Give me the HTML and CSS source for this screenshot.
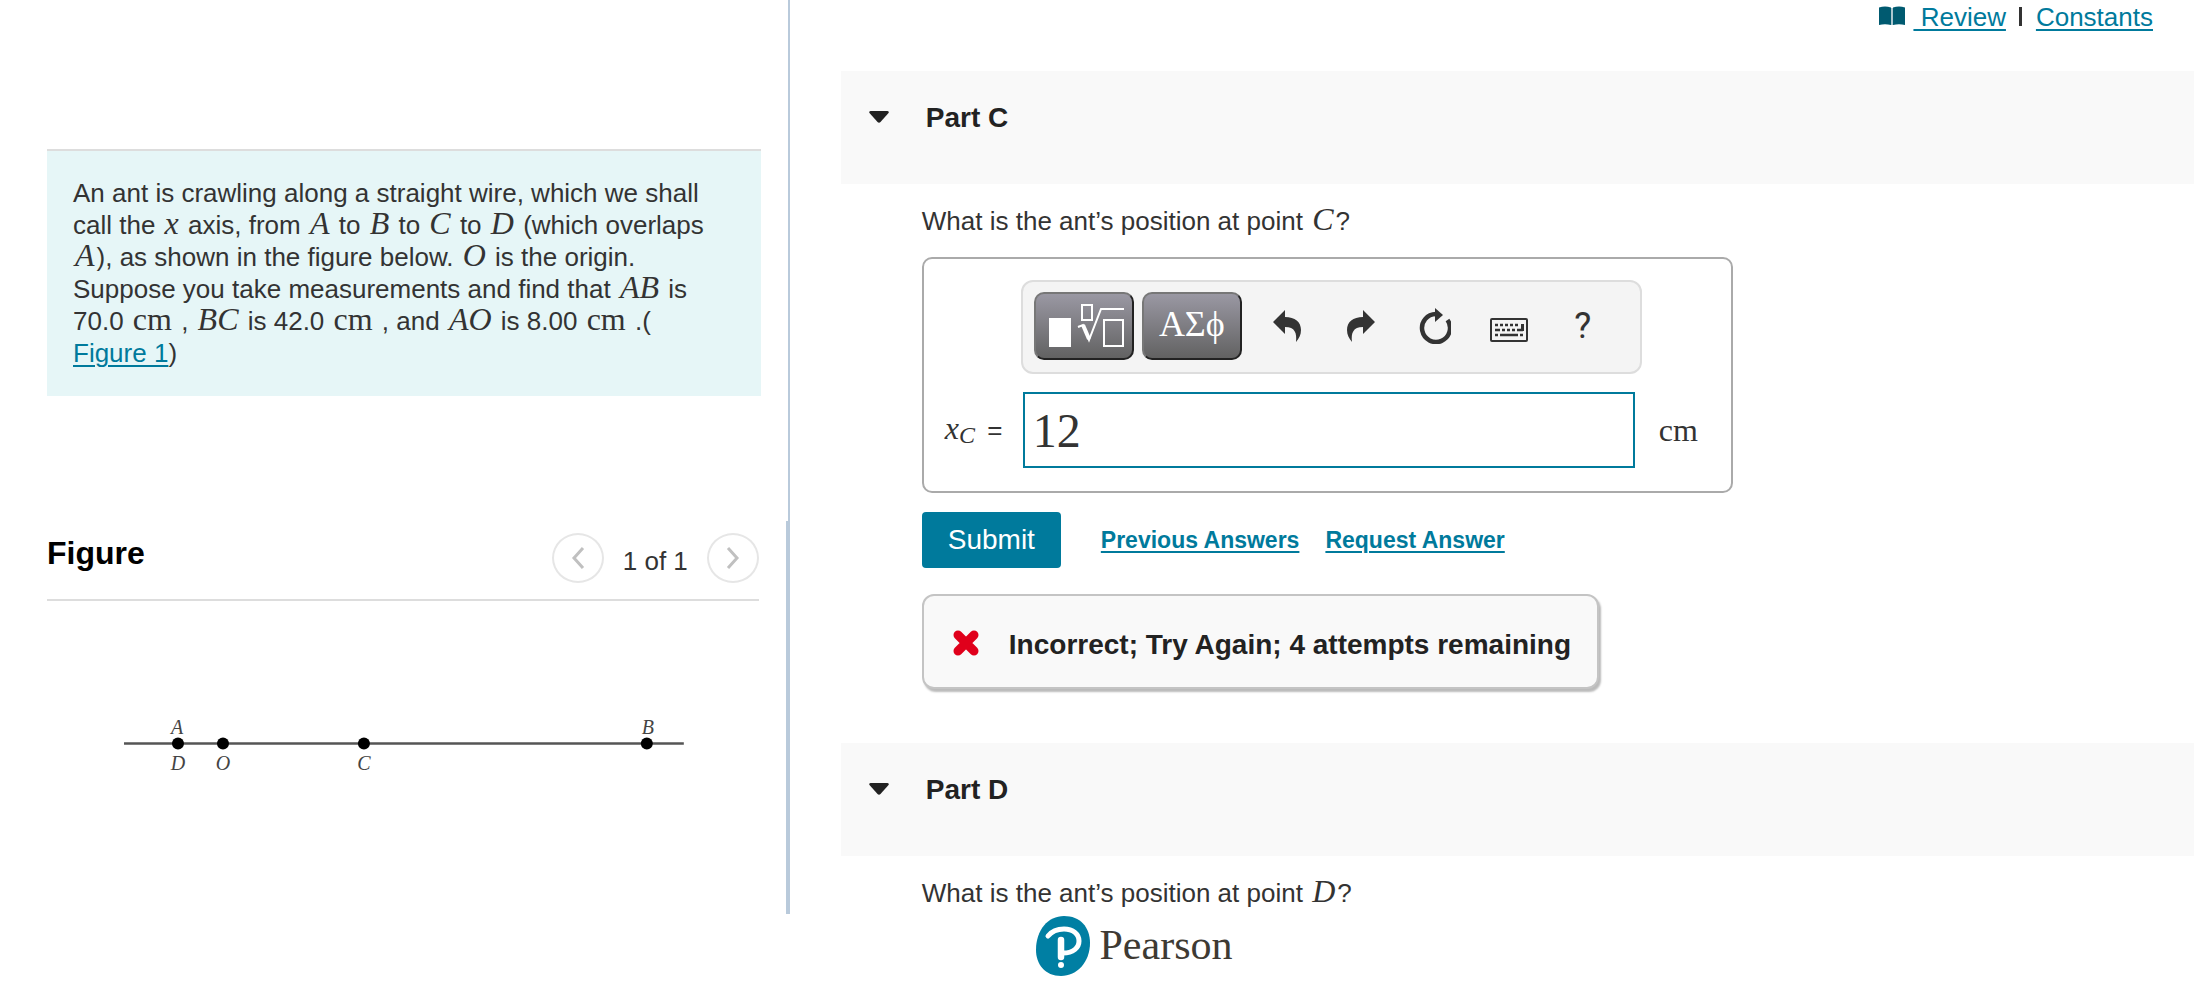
FILE: index.html
```html
<!DOCTYPE html>
<html lang="en">
<head>
    <meta charset="UTF-8">
    <meta name="viewport" content="width=device-width, initial-scale=1.0">
    <title>Mastering Physics</title>
    <link rel="stylesheet" href="styles.css">
</head>

<body>
    <main class="page">
        <aside class="left">
            <section class="intro">
                <div class="problem">
                    An ant is crawling along a straight wire, which we shall call the <i class="math">x</i> axis, from <i class="math">A</i> to <i class="math">B</i> to <i class="math">C</i> to <i class="math">D</i> (which overlaps <i class="math">A</i>), as shown in the figure below. <i class="math">O</i> is the origin. Suppose you take measurements and find that <i class="math">AB</i> is 70.0 <span class="unit">cm</span> , <i class="math">BC</i> is 42.0 <span class="unit">cm</span> , and <i class="math">AO</i> is 8.00 <span class="unit">cm</span> .(<br>
                    <a href="#figure">Figure 1</a>)
                </div>
            </section>
            <section class="figure" id="figure">
                <div class="figure-head">
                    <h2>Figure</h2>
                    <div class="pager">
                        <button class="round" aria-label="Previous figure">
                            <svg width="14" height="22" viewBox="0 0 14 22"><path d="M12 1 3 11l9 10"/></svg>
                        </button>
                        <span>1 of 1</span>
                        <button class="round" aria-label="Next figure">
                            <svg width="14" height="22" viewBox="0 0 14 22"><path d="M2 1l9 10-9 10"/></svg>
                        </button>
                    </div>
                </div>
                <svg class="wire" viewBox="0 0 712 90">
                    <path d="M77 43.5H637" stroke="#555" stroke-width="2.5"/>
                    <circle cx="131" cy="43.5" r="6"/>
                    <circle cx="176" cy="43.5" r="6"/>
                    <circle cx="317" cy="43.5" r="6"/>
                    <circle cx="600" cy="43.5" r="6"/>
                    <text x="130" y="34">A</text>
                    <text x="601" y="34">B</text>
                    <text x="131" y="70">D</text>
                    <text x="176" y="70">O</text>
                    <text x="317" y="70">C</text>
                </svg>
            </section>
        </aside>

        <div class="right">
            <nav class="links">
                <svg width="26" height="20" viewBox="0 0 26 20"><path d="M0 1.500Q6-.5 12 1.500V19Q6 17.500 0 19ZM14 1.500Q20-.5 26 1.500V19Q20 17.500 14 19Z" fill="#005a70"/><path d="M13 2v17" stroke="#8fb4bf" stroke-width="1.500"/></svg>
                <a class="review" href="#review">&nbsp;Review</a>
                <span class="sep"></span>
                <a href="#constants">Constants</a>
            </nav>

            <section>
                <h3 class="part-head">
                    <svg width="20" height="12" viewBox="0 0 20 12"><path d="M1.500 0h17q2 .5 1 2l-8 9q-1.500 1.500-3 0l-8-9q-1-1.500 1-2z"/></svg>
                    Part C
                </h3>
                <div class="part-body">
                    <p class="question">What is the ant’s position at point <i class="math">C</i>?</p>
                    <div class="answer">
                        <div class="toolbar">
                            <button class="dark" aria-label="Templates">
                                <svg width="96" height="64" viewBox="0 0 96 64" fill="none" stroke="#fff" stroke-width="2">
                                    <path d="M14 25h20v27H14z" fill="#fff"/>
                                    <path d="M46 11h10v15H46zM68 26h19v26H68z"/>
                                    <path d="M42 33l5-2 6 15 12-31h23"/>
                                    <path d="M47 31l6 14" stroke-width="4"/>
                                </svg>
                            </button>
                            <button class="dark greek">ΑΣϕ</button>
                            <div class="tools">
                                <button aria-label="Undo">
                                    <svg width="28" height="32" viewBox="0 0 28 32"><path d="M0 12 12 0v7c10 0 16 5 16 13 0 5-2 8-5 12 1-9-1-15-11-15v7z"/></svg>
                                </button>
                                <button aria-label="Redo">
                                    <svg width="28" height="32" viewBox="0 0 28 32"><path d="M28 12 16 0v7C6 7 0 12 0 20c0 5 2 8 5 12-1-9 1-15 11-15v7z"/></svg>
                                </button>
                                <button aria-label="Reset">
                                    <svg width="32" height="36" viewBox="0 0 32 36"><path d="M17 6A14 14 0 1 0 28.500 12" fill="none" stroke="#333" stroke-width="4.500"/><path d="M16 0l8 7-8 7z"/></svg>
                                </button>
                                <button class="keyboard" aria-label="Keyboard shortcuts">
                                    <svg width="38" height="24" viewBox="0 0 38 24"><rect x="1" y="1" width="36" height="22" rx="1" fill="none" stroke="#333" stroke-width="2"/><path d="M5 7h3M10 7h3M15 7h3M20 7h3M25 7h3M5 12h5M12 12h3M17 12h3M22 12h3M27 12h6M5 17h3M10 17h18M30 17h3" stroke="#333" stroke-width="2.500"/><path d="M31 6h3v7h-3z"/></svg>
                                </button>
                                <button class="help">?</button>
                            </div>
                        </div>
                        <label for="xc"><i class="math">x<sub>C</sub></i> =</label>
                        <input id="xc" type="text" value="12">
                        <span class="unit answer-unit">cm</span>
                    </div>
                    <div class="actions">
                        <button class="submit">Submit</button>
                        <a href="#previous">Previous Answers</a>
                        <a href="#request">Request Answer</a>
                    </div>
                    <div class="feedback">
                        <svg width="28" height="28" viewBox="0 0 28 28"><path d="M6 6l16 16M22 6L6 22" stroke="#e0001b" stroke-width="9" stroke-linecap="round"/></svg>
                        Incorrect; Try Again; 4 attempts remaining
                    </div>
                </div>
            </section>

            <section>
                <h3 class="part-head">
                    <svg width="20" height="12" viewBox="0 0 20 12"><path d="M1.500 0h17q2 .5 1 2l-8 9q-1.500 1.500-3 0l-8-9q-1-1.500 1-2z"/></svg>
                    Part D
                </h3>
                <div class="part-body">
                    <p class="question">What is the ant’s position at point <i class="math">D</i>?</p>
                </div>
            </section>
        </div>
    </main>

    <footer class="footer">
        <svg width="54" height="60" viewBox="0 0 54 60">
            <path d="M28 0C44 0 54 11 54 27 54 46 41 60 25 60 9 60 0 48 0 34 0 14 12 0 28 0z" fill="#007fa3"/>
            <path d="M12 20C16 15 22 13 28 13c9 0 15 5 15 12 0 7-6 12-16 12" fill="none" stroke="#fff" stroke-width="5" stroke-linecap="round"/>
            <path d="M25 24v17" stroke="#fff" stroke-width="6.500" stroke-linecap="round"/>
            <circle cx="25" cy="49" r="3" fill="#fff"/>
        </svg>
        <span>Pearson</span>
    </footer>
</body>
</html>
```
FILE: styles.css
```css
* {
    box-sizing: border-box;
}
body {
    margin: 0;
    font-family: "Liberation Sans", Arial, sans-serif;
    font-size: 26px;
    line-height: 32px;
    color: #333;
    background-color: #fff;
}
h2, h3, p {
    margin: 0;
}
a {
    color: #007a9c;
    text-underline-offset: 3px;
    text-decoration-thickness: 2px;
}
button {
    font-family: inherit;
    padding: 0;
    cursor: pointer;
}
.page {
    display: flex;
}
.math, .unit {
    padding: 0 2px;
    font-family: "Liberation Serif", "Times New Roman", serif;
    font-size: 32px;
    line-height: 0;
}

/* left column */
.left {
    flex: 0 0 36%;
    display: flex;
    flex-direction: column;
}
.intro {
    height: 521px;
    padding: 149px 27px 0 47px;
    border-right: 2px solid #b9cadb;
}
.problem {
    padding: 26px 20px 27px 26px;
    background-color: #e6f6f7;
    border-top: 2px solid #ddd;
}
.figure {
    flex: 1;
    padding: 0 27px 0 47px;
    border-right: 4px solid #b9cadb;
}
.figure-head {
    display: flex;
    justify-content: space-between;
    padding: 12px 0 16px;
    border-bottom: 2px solid #ddd;
}
.figure-head h2 {
    font-size: 32px;
    line-height: 40px;
    color: #000;
}
.pager {
    display: flex;
    gap: 19px;
}
.pager span {
    padding-top: 12px;
}
.round {
    width: 52px;
    height: 50px;
    display: flex;
    justify-content: center;
    align-items: center;
    background-color: #fff;
    border: 2px solid #e6e6e6;
    border-radius: 50%;
}
.round path {
    fill: none;
    stroke: #c0c0c0;
    stroke-width: 3;
}
.wire {
    display: block;
    width: 100%;
    margin-top: 99px;
}
.wire text {
    font-family: "Liberation Serif", "Times New Roman", serif;
    font-size: 20px;
    font-style: italic;
    text-anchor: middle;
    fill: #444;
}

/* right column */
.right {
    flex: 1;
    padding: 0 0 5px 51px;
}
.links {
    display: flex;
    justify-content: flex-end;
    height: 71px;
    padding: 1px 41px 0 0;
}
.links svg {
    margin: 5px 8px 0 0;
}
.sep {
    width: 3px;
    height: 19px;
    margin: 6px 14px 0 13px;
    background-color: #333;
}
.part-head {
    display: flex;
    gap: 37px;
    height: 113px;
    padding: 31px 28px 0;
    font-size: 28px;
    color: #222;
    background-color: #f9f9f9;
}
.part-head svg {
    margin-top: 9px;
    fill: #222;
}
.part-body {
    padding: 21px 0 0 81px;
}
.question {
    height: 32px;
}
.answer {
    display: grid;
    grid-template-columns: 97px 1fr 89px;
    row-gap: 18px;
    align-items: center;
    max-width: 811px;
    margin-top: 20px;
    padding: 21px 0 23px;
    border: 2px solid #aaa;
    border-radius: 10px;
}
.toolbar {
    grid-column: 2;
    display: flex;
    gap: 8px;
    height: 94px;
    padding: 10px 11px;
    background-color: #f4f4f4;
    border: 2px solid #ddd;
    border-radius: 12px;
}
.dark {
    width: 100px;
    height: 68px;
    color: #fff;
    background-image: linear-gradient(#9a98a3, #626262);
    border: 2px solid;
    border-color: #777 #222 #222 #777;
    border-radius: 10px;
}
.dark svg {
    display: block;
}
.greek {
    padding-bottom: 4px;
    font-family: "Liberation Serif", "Times New Roman", serif;
    font-size: 36px;
}
.tools {
    display: flex;
    height: 68px;
}
.tools button {
    width: 74px;
    display: flex;
    justify-content: center;
    align-items: center;
    background: none;
    border: none;
    color: #333;
}
.tools path {
    fill: #333;
}
.tools path[fill="none"] {
    fill: none;
}
.tools .keyboard {
    padding-top: 8px;
}
.tools .help {
    font-family: Roboto, "Liberation Sans", sans-serif;
    font-size: 36px;
}
.answer label {
    grid-column: 1;
    padding-left: 19px;
}
.answer sub {
    padding-right: 3px;
    font-size: 24px;
    vertical-align: -4px;
}
.answer input {
    min-width: 0;
    height: 76px;
    margin: 0 7px 0 2px;
    padding: 0 8px;
    font-family: "Liberation Serif", "Times New Roman", serif;
    font-size: 48px;
    color: #333;
    border: 2px solid #007a9c;
    outline: none;
}
.answer-unit {
    padding-left: 17px;
}
.actions {
    display: flex;
    align-items: center;
    gap: 26px;
    height: 56px;
    margin-top: 19px;
}
.actions a {
    font-size: 23px;
    font-weight: bold;
}
.submit {
    width: 139px;
    height: 56px;
    margin-right: 14px;
    font-size: 28px;
    color: #fff;
    background-color: #007a9c;
    border: none;
    border-radius: 4px;
}
.feedback {
    display: flex;
    align-items: center;
    gap: 29px;
    width: fit-content;
    height: 95px;
    margin: 26px 0 54px;
    padding: 6px 26px 0 28px;
    font-size: 28px;
    font-weight: bold;
    color: #222;
    background-color: #f9f9f9;
    border: 2px solid #c4c4c4;
    border-radius: 12px;
    box-shadow: 2px 3px 2px #bbb;
}
.feedback svg {
    margin-bottom: 4px;
}

.footer {
    display: flex;
    justify-content: center;
    gap: 10px;
    padding: 2px 0 12px 74px;
}
.footer span {
    padding-top: 13px;
    font-family: "Liberation Serif", "Times New Roman", serif;
    font-size: 42px;
    color: #3e3a33;
}
```
